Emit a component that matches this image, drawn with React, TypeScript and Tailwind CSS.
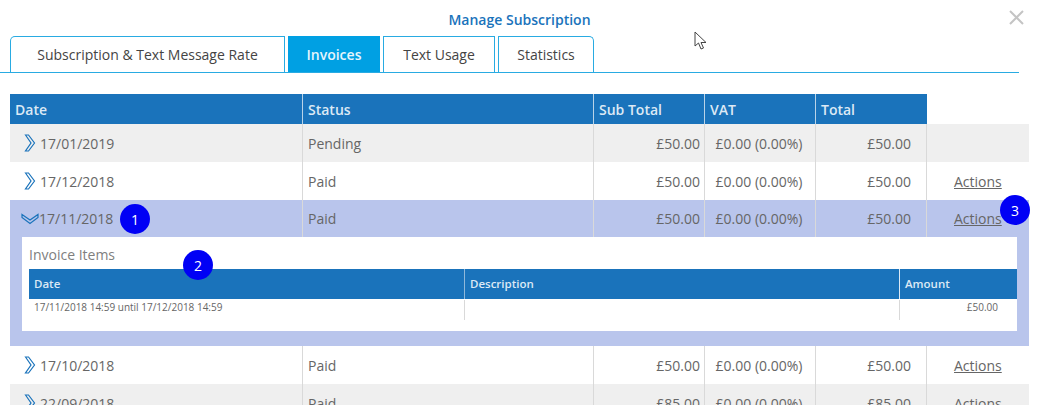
import type { ReactNode } from "react";

const COLS = "grid grid-cols-[293px_291px_111px_111px_111px_102px]";
const INNER_COLS = "grid grid-cols-[436px_435px_110px]";

interface Invoice {
  date: string;
  status: string;
  subTotal: string;
  total: string;
  actions?: boolean;
  open?: boolean;
  shaded?: boolean;
}

const before: Invoice[] = [
  { date: "17/01/2019", status: "Pending", subTotal: "£50.00", total: "£50.00", shaded: true },
  { date: "17/12/2018", status: "Paid", subTotal: "£50.00", total: "£50.00", actions: true },
  { date: "17/11/2018", status: "Paid", subTotal: "£50.00", total: "£50.00", actions: true, open: true },
];

const after: Invoice[] = [
  { date: "17/10/2018", status: "Paid", subTotal: "£50.00", total: "£50.00", actions: true },
  { date: "22/09/2018", status: "Paid", subTotal: "£85.00", total: "£85.00", actions: true, shaded: true },
];

function Chevron({ open }: { open?: boolean }) {
  if (open) {
    return (
      <svg width="18" height="12" viewBox="0 0 18 12" fill="none" stroke="#1a73bb" strokeWidth="1.2" className="ml-[11px] shrink-0">
        <path d="M1 1.5 L9 7 L17 1.5 L17 4.5 L9 10.5 L1 4.5 Z" strokeLinejoin="miter" />
      </svg>
    );
  }
  return (
    <svg width="12" height="18" viewBox="0 0 12 18" fill="none" stroke="#1a73bb" strokeWidth="1.2" className="ml-[14px] mr-[4px] shrink-0">
      <path d="M1.5 1 L7 9 L1.5 17 L4.5 17 L10.5 9 L4.5 1 Z" strokeLinejoin="miter" />
    </svg>
  );
}

function Cell({ children, className = "" }: { children?: ReactNode; className?: string }) {
  return <div className={`flex items-center border-r border-[#d9d9d9] ${className}`}>{children}</div>;
}

function Row({ row }: { row: Invoice }) {
  const bg = row.open ? "bg-[#b9c5ec]" : row.shaded ? "bg-[#efefef]" : "bg-white";
  return (
    <div className={`${COLS} ${bg} ${row.open ? "h-[37px]" : "h-[38px]"} text-[14px] text-[#666666]`}>
      <Cell>
        <Chevron open={row.open} />
        <span>{row.date}</span>
      </Cell>
      <Cell className="pl-[5px]">{row.status}</Cell>
      <Cell className="justify-end pr-[4px]">{row.subTotal}</Cell>
      <Cell className="justify-center pr-[2px]">£0.00 (0.00%)</Cell>
      <Cell className="justify-end pr-[15px]">{row.total}</Cell>
      <div className="flex items-center pl-[27px]">
        {row.actions && <span className="underline">Actions</span>}
      </div>
    </div>
  );
}

function InvoiceItems() {
  return (
    <div className="bg-[#b9c5ec] pl-[12px] pr-[12px] pb-[15px]">
      <div className="h-[94px] bg-white pl-[7px] pt-[8px]">
        <div className="h-[24px] text-[14px] leading-[19px] text-[#808080]">Invoice Items</div>
        <div className={`${INNER_COLS} h-[30px] bg-[#1a73bb] text-[11.5px] font-semibold text-[#dce9f5]`}>
          <div className="flex items-center border-r border-[#8fb8da] pl-[5px]">Date</div>
          <div className="flex items-center border-r border-[#dce9f5] pl-[5px]">Description</div>
          <div className="flex items-center pl-[5px]">Amount</div>
        </div>
        <div className={`${INNER_COLS} mt-px h-[20px] text-[10px] text-[#666666]`}>
          <div className="border-r border-[#d9d9d9] pl-[5px] leading-[14px]">17/11/2018 14:59 until 17/12/2018 14:59</div>
          <div className="border-r border-[#d9d9d9]" />
          <div className="pr-[12px] text-right leading-[14px]">£50.00</div>
        </div>
      </div>
    </div>
  );
}

function Badge({ n, className }: { n: number; className: string }) {
  return (
    <div className={`absolute flex h-[30px] w-[30px] items-center justify-center rounded-full bg-[#0000f5] text-[14px] text-white ${className}`}>
      {n}
    </div>
  );
}

const tabs = [
  { label: "Subscription & Text Message Rate", width: "w-[275px] rounded-tl-[5px]" },
  { label: "Invoices", width: "w-[92px]", active: true },
  { label: "Text Usage", width: "w-[112px]" },
  { label: "Statistics", width: "w-[96px] rounded-tr-[5px]" },
];

export default function App() {
  return (
    <div className="relative h-[405px] w-[1039px] overflow-hidden bg-white font-['Open_Sans',sans-serif]">
      <div className="flex h-[36px] items-center justify-center pt-[2px] text-[14px] font-semibold text-[#1a73bb]">
        Manage Subscription
      </div>
      <svg width="15" height="15" viewBox="0 0 15 15" stroke="#c4c4c4" strokeWidth="2" className="absolute left-[1009px] top-[10px]">
        <path d="M1 1 L14 14 M14 1 L1 14" />
      </svg>
      <svg width="14" height="21" viewBox="0 0 14 21" fill="white" stroke="#444444" strokeWidth="1" className="absolute left-[694px] top-[31px]">
        <path d="M1 1 L1 15 L4.5 12 L7 18 L9.5 17 L7 11.5 L12 11.5 Z" />
      </svg>

      <div className="ml-0 mr-[20px] flex h-[37px] gap-[3px] border-b border-[#29abe2] pl-[10px]">
        {tabs.map((tab) => (
          <div
            key={tab.label}
            className={`flex items-center justify-center border border-b-0 text-[14px] ${tab.width} ${
              tab.active
                ? "border-[#00a0e3] bg-[#00a0e3] font-semibold text-[#e6f5fc]"
                : "border-[#29abe2] bg-white text-[#444444]"
            }`}
          >
            {tab.label}
          </div>
        ))}
      </div>

      <div className="ml-[10px] mr-[10px] mt-[21px]">
        <div className={`${COLS} h-[30px] text-[14px] font-semibold text-[#dce9f5]`}>
          {["Date", "Status", "Sub Total", "VAT", "Total"].map((title) => (
            <div key={title} className="flex items-center border-r border-[#b9d3e8] bg-[#1a73bb] pl-[5px] last:border-r-0">
              {title}
            </div>
          ))}
        </div>
        {before.map((row) => (
          <Row key={row.date} row={row} />
        ))}
        <InvoiceItems />
        {after.map((row) => (
          <Row key={row.date} row={row} />
        ))}
      </div>

      <Badge n={1} className="left-[120px] top-[204px]" />
      <Badge n={2} className="left-[183px] top-[250px]" />
      <Badge n={3} className="left-[1000px] top-[195px]" />
    </div>
  );
}
